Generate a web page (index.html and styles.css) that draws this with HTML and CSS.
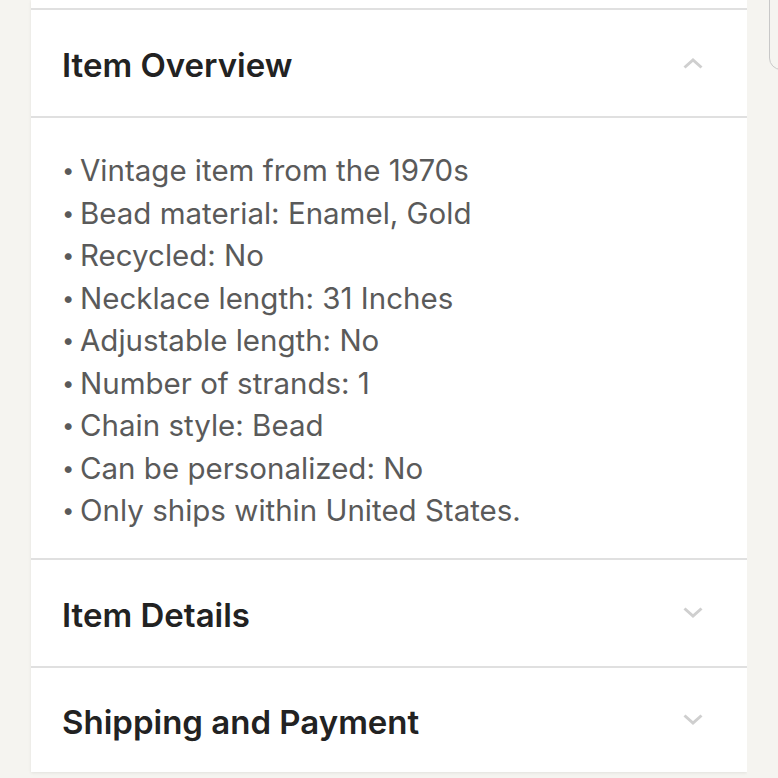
FILE: index.html
```html
<!DOCTYPE html>
<html>
<head>
<meta charset="utf-8">
<link rel="stylesheet" href="styles.css">
</head>
<body>
<div class="page">
  <div class="card">
    <div class="stub"></div>
    <section class="panel">
      <div class="head">
        <h2 class="title">Item Overview</h2>
        <svg class="chev" width="20" height="11" viewBox="0 0 20 11"><path d="M1.5 9.5 L10 2 L18.5 9.5" fill="none" stroke="#cfcfcf" stroke-width="3"/></svg>
      </div>
      <ul class="list">
        <li>Vintage item from the 1970s</li>
        <li>Bead material: Enamel, Gold</li>
        <li>Recycled: No</li>
        <li>Necklace length: 31 Inches</li>
        <li>Adjustable length: No</li>
        <li>Number of strands: 1</li>
        <li>Chain style: Bead</li>
        <li>Can be personalized: No</li>
        <li>Only ships within United States.</li>
      </ul>
    </section>
    <section class="panel">
      <div class="head">
        <h2 class="title">Item Details</h2>
        <svg class="chev" width="20" height="11" viewBox="0 0 20 11"><path d="M1.5 1.5 L10 9 L18.5 1.5" fill="none" stroke="#cfcfcf" stroke-width="3"/></svg>
      </div>
    </section>
    <section class="panel last">
      <div class="head">
        <h2 class="title">Shipping and Payment</h2>
        <svg class="chev" width="20" height="11" viewBox="0 0 20 11"><path d="M1.5 1.5 L10 9 L18.5 1.5" fill="none" stroke="#cfcfcf" stroke-width="3"/></svg>
      </div>
    </section>
  </div>
</div>
<div class="side-pill"></div>
</body>
</html>
```
FILE: styles.css
```css
html, body {
  margin: 0;
  padding: 0;
  background: #f5f4f0;
  font-family: "Inter", "Roboto", sans-serif;
}
.page {
  padding-left: 31px;
  width: 716px;
  overflow: hidden;
  height: 778px;
}
.card {
  background: #fff;
  box-shadow: 0 1px 3px rgba(0,0,0,0.08);
}
.stub {
  height: 8px;
}
.panel {
  border-top: 2px solid #e0e0e0;
}
.head {
  height: 106px;
  box-sizing: border-box;
  padding: 4px 44px 0 31px;
  display: flex;
  align-items: center;
  justify-content: space-between;
}
.title {
  margin: 0;
  font-size: 33px;
  font-weight: 600;
  color: #222;
}
.chev {
  display: block;
  margin-top: -4px;
}
.list {
  list-style: none;
  margin: 0;
  border-top: 2px solid #e0e0e0;
  padding: 31px 31px 26px 31px;
}
.list li {
  font-size: 29.5px;
  line-height: 42.5px;
  color: #5a5a5a;
}
.list li::before {
  content: "•";
  display: inline-block;
  width: 18px;
  font-size: 22px;
  vertical-align: top;
}
.last .head {
  height: 104px;
}
.side-pill {
  position: fixed;
  top: -20px;
  left: 769px;
  width: 40px;
  height: 90px;
  border: 1px solid #c8c8c8;
  border-radius: 12px;
  box-sizing: border-box;
  background: #f5f4f0;
}
```
